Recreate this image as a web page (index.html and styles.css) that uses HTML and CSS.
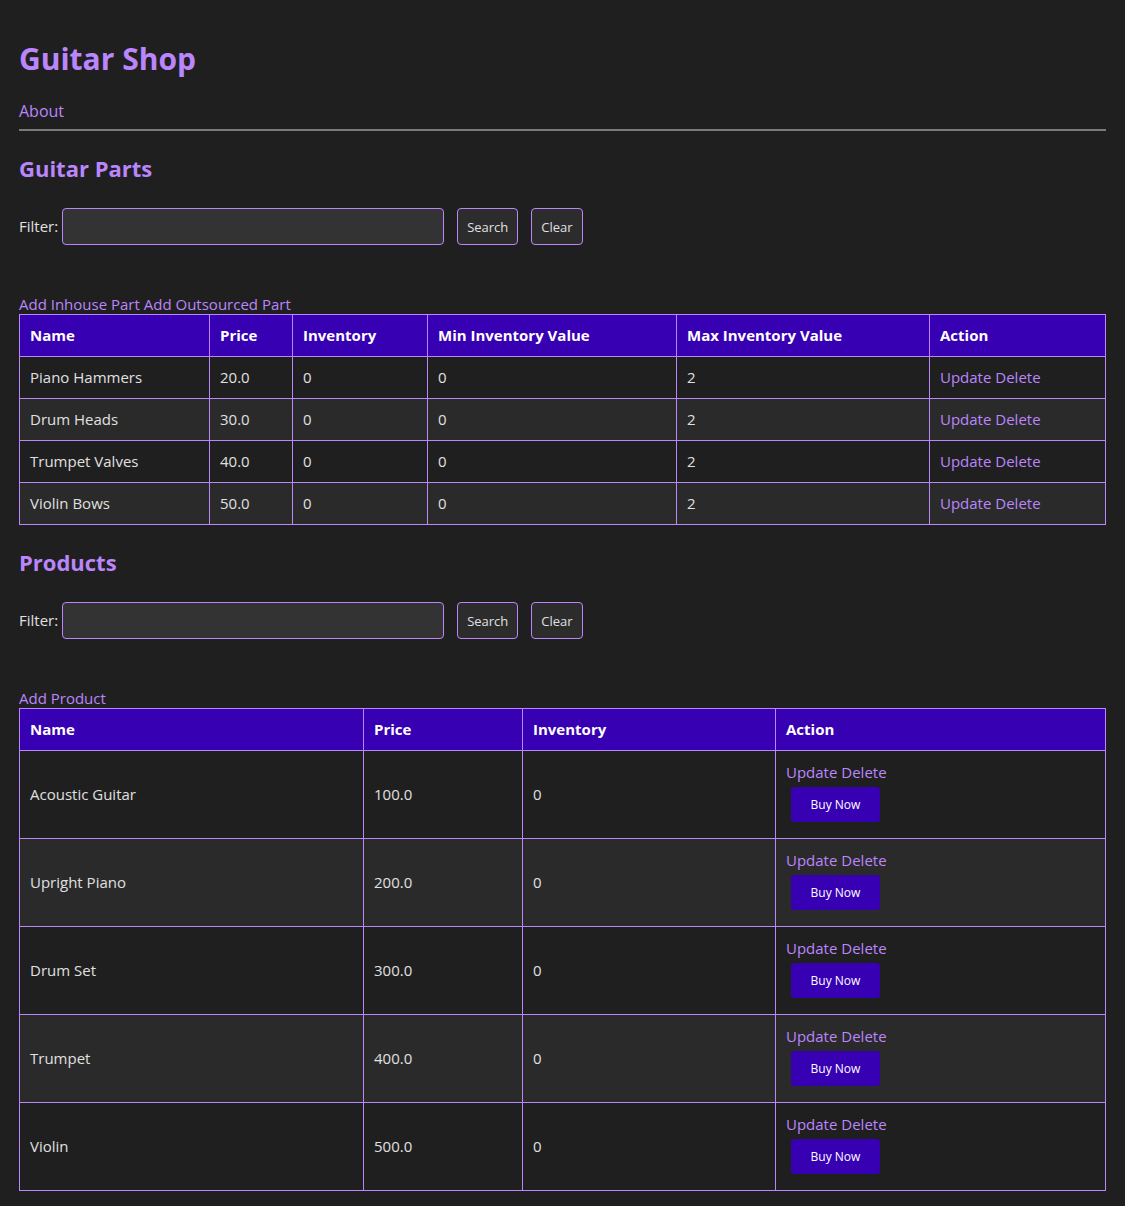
FILE: index.html
```html
<!DOCTYPE html>
<html lang="en">
<head>
<meta charset="utf-8">
<title>Guitar Shop</title>
<link rel="stylesheet" href="styles.css">
</head>
<body>
<h1 class="title">Guitar Shop</h1>
<nav class="nav"><a href="#">About</a></nav>
<hr class="rule">

<h2 class="section-title">Guitar Parts</h2>
<form class="filter">
  <label class="filter-label">Filter:</label>
  <input class="filter-input" type="text">
  <button class="btn" type="button">Search</button>
  <button class="btn" type="button">Clear</button>
</form>
<div class="add-links"><a href="#">Add Inhouse Part</a> <a href="#">Add Outsourced Part</a></div>
<table class="grid parts">
  <thead>
    <tr><th class="c1">Name</th><th class="c2">Price</th><th class="c3">Inventory</th><th class="c4">Min Inventory Value</th><th class="c5">Max Inventory Value</th><th>Action</th></tr>
  </thead>
  <tbody>
    <tr><td>Piano Hammers</td><td>20.0</td><td>0</td><td>0</td><td>2</td><td><a href="#">Update</a> <a href="#">Delete</a></td></tr>
    <tr><td>Drum Heads</td><td>30.0</td><td>0</td><td>0</td><td>2</td><td><a href="#">Update</a> <a href="#">Delete</a></td></tr>
    <tr><td>Trumpet Valves</td><td>40.0</td><td>0</td><td>0</td><td>2</td><td><a href="#">Update</a> <a href="#">Delete</a></td></tr>
    <tr><td>Violin Bows</td><td>50.0</td><td>0</td><td>0</td><td>2</td><td><a href="#">Update</a> <a href="#">Delete</a></td></tr>
  </tbody>
</table>

<h2 class="section-title products-title">Products</h2>
<form class="filter">
  <label class="filter-label">Filter:</label>
  <input class="filter-input" type="text">
  <button class="btn" type="button">Search</button>
  <button class="btn" type="button">Clear</button>
</form>
<div class="add-links"><a href="#">Add Product</a></div>
<table class="grid products">
  <thead>
    <tr><th class="p1">Name</th><th class="p2">Price</th><th class="p3">Inventory</th><th>Action</th></tr>
  </thead>
  <tbody>
    <tr><td>Acoustic Guitar</td><td>100.0</td><td>0</td><td class="action"><div class="links"><a href="#">Update</a> <a href="#">Delete</a></div><button class="buy" type="button">Buy Now</button></td></tr>
    <tr><td>Upright Piano</td><td>200.0</td><td>0</td><td class="action"><div class="links"><a href="#">Update</a> <a href="#">Delete</a></div><button class="buy" type="button">Buy Now</button></td></tr>
    <tr><td>Drum Set</td><td>300.0</td><td>0</td><td class="action"><div class="links"><a href="#">Update</a> <a href="#">Delete</a></div><button class="buy" type="button">Buy Now</button></td></tr>
    <tr><td>Trumpet</td><td>400.0</td><td>0</td><td class="action"><div class="links"><a href="#">Update</a> <a href="#">Delete</a></div><button class="buy" type="button">Buy Now</button></td></tr>
    <tr><td>Violin</td><td>500.0</td><td>0</td><td class="action"><div class="links"><a href="#">Update</a> <a href="#">Delete</a></div><button class="buy" type="button">Buy Now</button></td></tr>
  </tbody>
</table>
</body>
</html>
```
FILE: styles.css
```css
html { background: #1f1f1f; }
body {
  margin: 0;
  padding: 0 19px 20px;
  background: #1f1f1f;
  color: #e0e0e0;
  font-family: "Open Sans", "Noto Sans", sans-serif;
  font-size: 15px;
  line-height: 21px;
}
a { color: #bb86fc; text-decoration: none; }

.title {
  margin: 0;
  padding-top: 38px;
  font-size: 30px;
  line-height: 42px;
  font-weight: 700;
  color: #bb86fc;
}
.nav { margin-top: 20px; font-size: 16px; line-height: 22px; }
.rule {
  margin: 7px 0 0;
  border: 0;
  height: 2px;
  background: #7a7a7a;
}
.section-title {
  margin: 22px 0 0;
  font-size: 22px;
  line-height: 30px;
  font-weight: 700;
  color: #bb86fc;
}
.products-title { margin-top: 22px; }

.filter {
  display: flex;
  align-items: center;
  margin-top: 25px;
  height: 37px;
}
.filter-label { margin-right: 4px; }
.filter-input {
  box-sizing: border-box;
  width: 382px;
  height: 37px;
  margin: 0 13px 0 0;
  background: #333333;
  border: 1px solid #bb86fc;
  border-radius: 4px;
  color: #e0e0e0;
}
.btn {
  box-sizing: border-box;
  height: 37px;
  padding: 0 9px;
  margin-right: 13px;
  background: #2c2c2c;
  color: #e0e0e0;
  border: 1px solid #bb86fc;
  border-radius: 4px;
  font-family: inherit;
  font-size: 13px;
}

.add-links {
  margin-top: 49px;
  font-size: 15px;
  line-height: 20px;
}

.grid {
  width: 100%;
  border-collapse: collapse;
  text-align: left;
}
.grid th, .grid td {
  border: 1px solid #bb86fc;
  padding: 10px 10px;
  height: 21px;
  vertical-align: middle;
}
.grid th {
  background: #3700b3;
  color: #ffffff;
  font-weight: 700;
}
.grid tbody tr:nth-child(even) td { background: #2a2a2a; }
.grid tbody tr:nth-child(odd) td { background: #1f1f1f; }

.parts .c1 { width: 169px; }
.parts .c2 { width: 62px; }
.parts .c3 { width: 114px; }
.parts .c4 { width: 228px; }
.parts .c5 { width: 232px; }

.products .p1 { width: 323px; }
.products .p2 { width: 138px; }
.products .p3 { width: 232px; }

.products td.action { padding-top: 10px; padding-bottom: 16px; }
.links { line-height: 22px; }
.buy {
  display: block;
  margin: 4px 0 0 5px;
  width: 89px;
  height: 35px;
  background: #3700b3;
  color: #ffffff;
  border: 0;
  border-radius: 3px;
  font-family: inherit;
  font-size: 12px;
}
```
